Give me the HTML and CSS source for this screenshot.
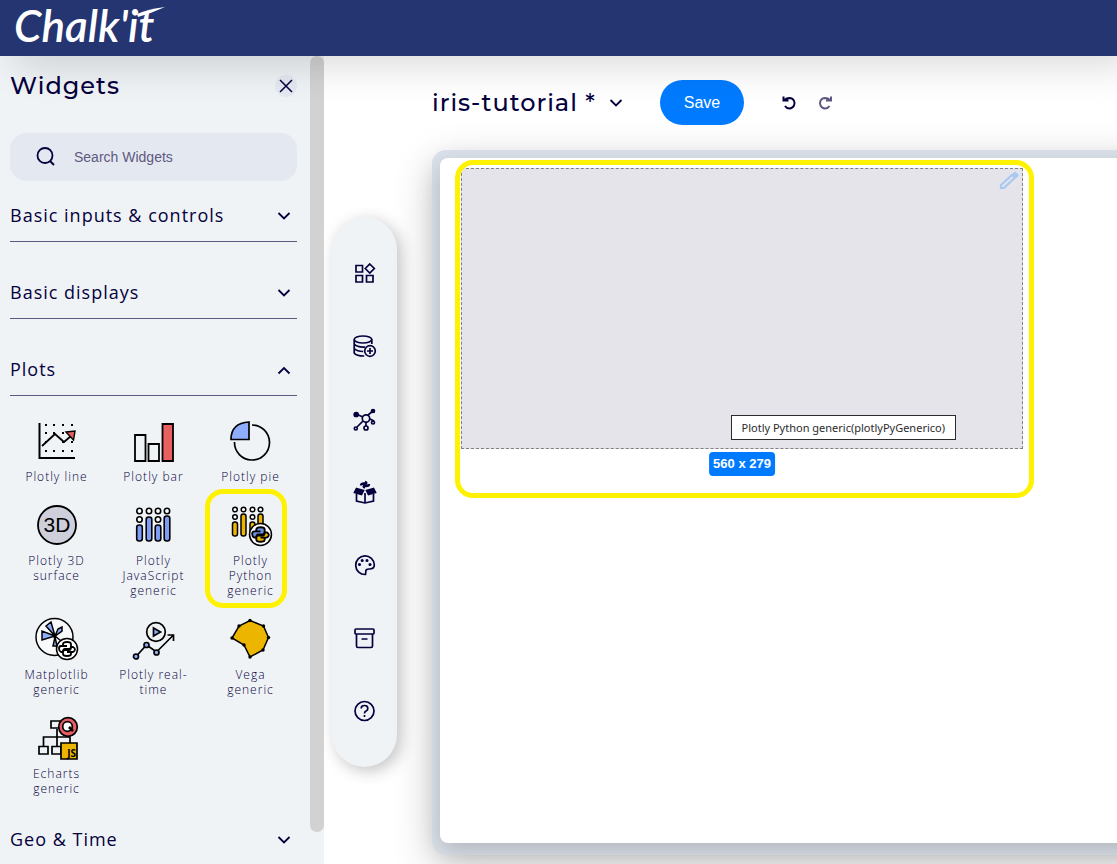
FILE: index.html
```html
<!DOCTYPE html>
<html lang="en">
<head>
<meta charset="utf-8">
<title>Chalk'it</title>
<link rel="stylesheet" href="styles.css">
</head>
<body>
<svg class="defs" aria-hidden="true">
  <symbol id="chevron" viewBox="0 0 16 16"><path d="M2.500 6L8 11.500 13.500 6" fill="none" stroke="currentColor" stroke-width="1.800"/></symbol>
  <symbol id="python" viewBox="0 0 24 24">
    <circle cx="12" cy="12" r="10.500" fill="#fff" stroke="#000" stroke-width="1.500"/>
    <path class="snake-top" d="M8 9V7q0-2 4-2t4 2v3q0 2-2 2h-4q-2 0-2 3H6q-2-1-2-3.500t2-2.500h6" stroke="#000" stroke-width="1.800"/>
    <path class="snake-bottom" d="M16 15v2q0 2-4 2t-4-2v-2q0-2 2-2h4q2 0 2-3h2q2 1 2 2.500t-2 2.500h-6" stroke="#000" stroke-width="1.800"/>
  </symbol>
</svg>

<header class="topbar">
  <a class="logo" href="#">Chalk'it<svg class="swash" width="30" height="14" viewBox="0 0 30 14" aria-hidden="true"><path d="M1 10Q12 5 29 3 16 9 2 13z" fill="#fff"/></svg></a>
</header>

<div class="layout">
  <aside class="sidebar">
    <div class="sidebar-head">
      <h2 class="heading">Widgets</h2>
      <button class="close" type="button" aria-label="Close">
        <svg width="16" height="16" viewBox="0 0 16 16"><path d="M2 2l12 12M14 2L2 14" stroke="#05003d" stroke-width="1.500"/></svg>
      </button>
    </div>
    <label class="search">
      <svg width="20" height="20" viewBox="0 0 20 20"><circle cx="9" cy="8.500" r="7.500" fill="none" stroke="#05003d" stroke-width="1.800"/><path d="M14 14l4 4" stroke="#05003d" stroke-width="2"/></svg>
      <input type="text" placeholder="Search Widgets" aria-label="Search Widgets">
    </label>

    <button class="section" type="button">Basic inputs &amp; controls<svg class="chev"><use href="#chevron"/></svg></button>
    <button class="section" type="button">Basic displays<svg class="chev"><use href="#chevron"/></svg></button>
    <button class="section" type="button" aria-expanded="true">Plots<svg class="chev"><path d="M2.500 12.500L8 7l5.500 5.500" fill="none" stroke="currentColor" stroke-width="1.800"/></svg></button>

    <div class="widgets">
      <button class="widget" type="button">
        <svg viewBox="0 0 44 44"><g fill="#000"><path d="M10 5h2v2h-2zM18 5h2v2h-2zM27 5h2v2h-2zM36 5h2v2h-2zM10 13h2v2h-2zM18 13h2v2h-2zM27 13h2v2h-2zM10 22h2v2h-2zM27 22h2v2h-2zM36 22h2v2h-2zM10 31h2v2h-2zM18 31h2v2h-2zM27 31h2v2h-2zM36 31h2v2h-2z"/></g><path d="M4.500 4v35H40" fill="none" stroke="#000" stroke-width="2"/><path d="M7 27l13-12 9 8 7-6" fill="none" stroke="#000" stroke-width="1.800"/><path d="M31 13l9-1-1.500 9z" fill="#e96060" stroke="#000" stroke-width="1.400"/></svg>
        <span>Plotly line</span>
      </button>
      <button class="widget" type="button">
        <svg viewBox="0 0 44 44" fill="none" stroke="#000" stroke-width="1.800"><path d="M3 16h10.500v26H3zM16.500 25H27v17H16.500z"/><path d="M30.500 5H41v37H30.500z" fill="#e96060"/></svg>
        <span>Plotly bar</span>
      </button>
      <button class="widget" type="button">
        <svg viewBox="0 0 44 44" fill="none" stroke="#000" stroke-width="1.700"><path d="M23 6a17.500 17.500 0 1 1-17.500 17"/><path d="M20 3v17.500H2Q2 4 20 3z" fill="#8eaefb"/></svg>
        <span>Plotly pie</span>
      </button>

      <button class="widget" type="button">
        <svg viewBox="0 0 44 44"><circle cx="22" cy="22" r="19" fill="#cfcfdb" stroke="#000" stroke-width="1.800"/><text class="icon-3d" x="22" y="29" text-anchor="middle">3D</text></svg>
        <span>Plotly 3D surface</span>
      </button>
      <button class="widget" type="button">
        <svg viewBox="0 0 44 44" fill="#fff" stroke="#000" stroke-width="1.600"><circle cx="7.500" cy="8" r="2.700"/><circle cx="17" cy="8" r="2.700"/><circle cx="26" cy="8" r="2.700"/><circle cx="35" cy="8" r="2.700"/><circle cx="7.500" cy="16.500" r="2.700"/><circle cx="26" cy="16.500" r="2.700"/><g fill="#7c9ff5"><rect x="4.700" y="22" width="5.600" height="16" rx="2.500"/><rect x="14.200" y="14" width="5.600" height="24" rx="2.500"/><rect x="23.200" y="22" width="5.600" height="16" rx="2.500"/><rect x="32.200" y="13" width="5.600" height="25" rx="2.500"/></g></svg>
        <span>Plotly JavaScript generic</span>
      </button>
      <button class="widget chosen" type="button">
        <svg viewBox="0 0 44 44"><g fill="#fff" stroke="#000" stroke-width="1.500"><circle cx="6" cy="6.500" r="2.300"/><circle cx="14.500" cy="6.500" r="2.300"/><circle cx="23.500" cy="6.500" r="2.300"/><circle cx="31.500" cy="6.500" r="2.300"/><circle cx="6" cy="14" r="2.300"/><circle cx="23.500" cy="14" r="2.300"/><g fill="#ecb500"><rect x="3.500" y="19" width="5" height="14" rx="2.300"/><rect x="12" y="11" width="5" height="22" rx="2.300"/><rect x="21" y="19" width="5" height="14" rx="2.300"/><rect x="29" y="11" width="5" height="18" rx="2.300"/></g></g><use href="#python" class="color-snakes" x="19" y="19" width="25" height="25"/></svg>
        <span>Plotly Python generic</span>
      </button>

      <button class="widget" type="button">
        <svg viewBox="0 0 44 44"><circle cx="19.500" cy="20" r="18.500" fill="#f8fafc" stroke="#000" stroke-width="1.500"/><path d="M20 19L11 9l5-4zM20 19l3-7 4-2 0 4zM20 19L7 14v9zM20 20l-2 9h4zM20 19l11 9" fill="#8eaefb" stroke="#000" stroke-width="1.500"/><use href="#python" class="plain-snakes" x="20" y="20" width="24" height="24"/></svg>
        <span>Matplotlib generic</span>
      </button>
      <button class="widget" type="button">
        <svg viewBox="0 0 44 44" fill="none" stroke="#000" stroke-width="1.700"><circle cx="24" cy="15" r="9.300"/><path d="M21.500 11v8l7-4z" fill="#8eaefb"/><path d="M4.500 39l10-11 10 7 17-17M35.500 18h6v6"/><g fill="#8eaefb"><circle cx="4" cy="39.500" r="2.500"/><circle cx="14.500" cy="28" r="2.500"/><circle cx="24.500" cy="35.500" r="2.500"/></g></svg>
        <span>Plotly real-time</span>
      </button>
      <button class="widget" type="button">
        <svg viewBox="0 0 44 44"><path d="M21 3.500l13.500 5.500L39.500 20.500 34 33l-13 7-6-12L3 21l7-12z" fill="#ecb500" stroke="#000" stroke-width="1.500"/><g><circle cx="21" cy="3.500" r="1.700"/><circle cx="34.500" cy="9" r="1.700"/><circle cx="39.500" cy="20.500" r="1.700"/><circle cx="34" cy="33" r="1.700"/><circle cx="21" cy="40" r="1.700"/><circle cx="15" cy="28" r="1.700"/><circle cx="3" cy="21" r="1.700"/><circle cx="10" cy="9" r="1.700"/></g></svg>
        <span>Vega generic</span>
      </button>

      <button class="widget" type="button">
        <svg viewBox="0 0 44 44" fill="none" stroke="#000" stroke-width="1.700"><path d="M16 5h9v7h-9zM22 13v17M8.500 30v-9H35v6M4 30.500h9V38H4zM17 30.500h9V38h-9z"/><circle cx="33" cy="11" r="9.300" fill="#e85c66"/><circle cx="32.500" cy="10.500" r="4.800" fill="#fff"/><path d="M34 11l4 4" stroke-width="2.500"/><path d="M26 27h16v16H26z" fill="#ecb500"/><text class="icon-js" x="41" y="41" text-anchor="end">JS</text></svg>
        <span>Echarts generic</span>
      </button>
    </div>

    <button class="section" type="button">Geo &amp; Time<svg class="chev"><use href="#chevron"/></svg></button>
    <div class="scroll-thumb"></div>
  </aside>

  <main class="workspace">
    <nav class="rail" aria-label="Tools">
      <button type="button" aria-label="Widgets"><svg viewBox="0 0 24 24"><path d="M3 4.500h6.500V11H3zM3 14.500h6.500V21H3zM13.500 14.500H20V21h-6.500zM16.800 3l4.500 4.500-4.500 4.500-4.500-4.500z"/></svg></button>
      <button type="button" aria-label="Data"><svg viewBox="0 0 24 24"><ellipse cx="10" cy="5.500" rx="8.800" ry="3.500"/><path d="M1.200 5.500V19q2 3 10 3M18.800 5.500V10M1.200 10q3 3.500 11 3M1.200 14.500q3 3 9 3"/><circle cx="17" cy="17" r="5.300"/><path d="M17 14v6M14 17h6"/></svg></button>
      <button type="button" aria-label="Dependencies"><svg viewBox="0 0 24 24"><path d="M3 7l7 3M20 4l-5 4M10 14l-6 6M13 15v4M17 12l4 2"/><circle cx="13" cy="11.500" r="3.700"/><circle cx="13" cy="21" r="2"/><circle cx="2.800" cy="21.500" r="1.500"/><circle cx="20" cy="15.500" r="1.500"/><g class="solid"><circle cx="3.200" cy="7.500" r="2"/><circle cx="20" cy="4" r="1.500"/></g></svg></button>
      <button type="button" aria-label="Libraries"><svg viewBox="0 0 24 24"><path d="M3.500 14v7l8.500 2 8.500-2v-7M12 13v10"/><g class="solid"><path d="M3.500 8.500l7 2-2 4-7-2zM20.500 8.500l-7 2 2 4 7-2z"/></g><path d="M8 5.500q0-2 3-2h2q1-1-1-1.500M16 4q0 2-3 2h-2q-1 1 1 1.500" stroke-width="2.400"/></svg></button>
      <button type="button" aria-label="Theme"><svg viewBox="0 0 24 24"><path d="M12.500 21.500a9.300 9.300 0 1 1 8.800-9.500q0 4-5 4-4 0-3.500 3z"/><g class="solid"><circle cx="6.500" cy="11.500" r=".7"/><circle cx="9.200" cy="7.500" r=".7"/><circle cx="14" cy="7.500" r=".7"/><circle cx="17" cy="11.500" r=".7"/></g></svg></button>
      <button type="button" aria-label="Archive"><svg viewBox="0 0 24 24"><rect x="2" y="3" width="19" height="5" rx="1"/><path d="M3.500 8v12q0 1.500 1.500 1.500h13q1.500 0 1.500-1.500V8M8.500 13h6"/></svg></button>
      <button type="button" aria-label="Help"><svg viewBox="0 0 24 24"><circle cx="11.500" cy="12" r="9.500"/><path d="M8.200 9.500q0-3 3.300-3t3.300 3q0 1.700-1.700 2.500t-1.600 2.500M11.500 16v2"/></svg></button>
    </nav>

    <div class="editor">
      <div class="project-bar">
        <h1 class="heading">iris-tutorial *</h1>
        <button class="icon-button" type="button" aria-label="Project menu"><svg class="chev" viewBox="0 1 16 16"><use href="#chevron" width="16" height="16"/></svg></button>
        <button class="save" type="button">Save</button>
        <button class="icon-button" type="button" aria-label="Undo"><svg width="16" height="16" viewBox="0 0 16 16" fill="none" stroke="#05003d" stroke-width="2"><path d="M3.500 5Q5.500 3 8.500 3a5.200 5.200 0 1 1-4.500 8M2.500 1.500v4h5"/></svg></button>
        <button class="icon-button redo" type="button" aria-label="Redo"><svg width="16" height="16" viewBox="0 0 16 16" fill="none" stroke="#5e5980" stroke-width="2"><path d="M13 5Q11 3 8 3a5.200 5.200 0 1 0 4.500 8M14 1.500v4h-5"/></svg></button>
      </div>

      <div class="frame">
        <div class="canvas">
          <div class="placed">
            <svg class="pencil" width="20" height="20" viewBox="0 0 20 20" fill="none" stroke="#a9c9f2" stroke-width="2.200"><path d="M2 17v-3L13 4l3 2.500L5 17zM15 3l1-1 2.500 2-1 1.500z"/></svg>
            <div class="tooltip">Plotly Python generic(plotlyPyGenerico)</div>
            <div class="size">560 x 279</div>
          </div>
        </div>
      </div>
    </div>
  </main>
</div>
</body>
</html>
```

FILE: styles.css
```css
* { box-sizing: border-box; }

body {
  margin: 0;
  height: 100vh;
  display: flex;
  flex-direction: column;
  overflow: hidden;
  color: #05003d;
  background: #fff;
  font-family: "Open Sans", sans-serif;
}

button {
  margin: 0;
  padding: 0;
  border: 0;
  background: none;
  color: inherit;
  font: inherit;
  cursor: pointer;
}

.defs { position: absolute; width: 0; height: 0; }

.topbar {
  position: relative;
  z-index: 2;
  flex: none;
  height: 56px;
  padding: 0 12px;
  background: #243572;
  box-shadow: 16px 8px 40px rgba(0, 0, 0, 0.16);
}

.logo {
  position: relative;
  display: inline-block;
  padding: 0 8px 0 2px;
  color: #fff;
  font: italic 600 44px/50px Lato, sans-serif;
  text-decoration: none;
}

.swash { position: absolute; top: 4px; right: -4px; }

.layout { flex: 1; min-height: 0; display: flex; }

.sidebar {
  position: relative;
  flex: none;
  width: 324px;
  padding: 0 27px 0 10px;
  overflow: hidden;
  background: #eff3f6;
}

.sidebar-head {
  display: flex;
  align-items: center;
  justify-content: space-between;
  height: 60px;
}

.heading {
  margin: 0;
  font: 500 24px/32px Montserrat, Inter, sans-serif;
  letter-spacing: 1px;
}

.close {
  display: grid;
  place-items: center;
  width: 22px;
  height: 22px;
  border-radius: 50%;
  background: #e4e8f0;
}

.search {
  display: flex;
  align-items: center;
  gap: 18px;
  height: 48px;
  margin: 17px 0 7px;
  padding: 0 26px;
  border-radius: 16px;
  background: #e4e8f0;
}

.search input {
  flex: 1;
  min-width: 0;
  padding: 0;
  border: 0;
  outline: 0;
  background: none;
  font: 14px "Liberation Sans", sans-serif;
}

.search input::placeholder { color: #5e5980; }

.section {
  display: flex;
  align-items: center;
  justify-content: space-between;
  width: 100%;
  height: 54px;
  margin-bottom: 23px;
  padding-right: 5px;
  border-bottom: 1px solid #5e5980;
  font-size: 18px;
  font-weight: 400;
  letter-spacing: 1px;
}

.chev { width: 16px; height: 16px; }

.widgets {
  display: grid;
  grid-template-columns: repeat(3, 1fr);
  row-gap: 19px;
  margin: 0 -2px 16px;
}

.widget {
  display: flex;
  flex-direction: column;
  align-items: center;
  gap: 6px;
  padding: 0 12px;
  font-size: 12px;
  font-weight: 300;
  line-height: 15px;
  letter-spacing: 1px;
}

.widget svg { width: 44px; height: 44px; }

.icon-3d { font: 21px "Liberation Sans", sans-serif; letter-spacing: 0; }
.icon-js { font: bold 10px "Open Sans", sans-serif; letter-spacing: 0; fill: #000; stroke: none; }
.snake-top { fill: var(--top); }
.snake-bottom { fill: var(--bottom); }
.color-snakes { --top: #6d8fe0; --bottom: #ecb500; }
.plain-snakes { --top: #fff; --bottom: #fff; }

.chosen { position: relative; }

.chosen::after {
  content: "";
  position: absolute;
  inset: -14px 12px -10px 3px;
  border: 5px solid #fff200;
  border-radius: 18px;
}

.scroll-thumb {
  position: absolute;
  top: 0;
  right: 0;
  width: 14px;
  height: 96%;
  border-radius: 7px;
  background: #d2d2d2;
}

.workspace {
  flex: 1;
  min-width: 0;
  display: flex;
  align-items: flex-start;
  gap: 35px;
  padding-left: 8px;
}

.rail {
  flex: none;
  display: flex;
  flex-direction: column;
  align-items: center;
  gap: 49px;
  width: 65px;
  margin-top: 161px;
  padding: 44px 0;
  border-radius: 33px;
  background: #eff3f6;
  box-shadow: 4px 4px 16px rgba(0, 0, 0, 0.24);
}

.rail button { width: 24px; height: 24px; }
.rail svg { display: block; fill: none; stroke: #05003d; stroke-width: 1.7; }
.rail .solid { fill: #05003d; }

.editor {
  flex: 1;
  min-width: 0;
  align-self: stretch;
  display: flex;
  flex-direction: column;
  padding-bottom: 9px;
}

.project-bar {
  display: flex;
  align-items: center;
  height: 45px;
  margin: 24px 0 25px;
}

.project-bar .heading { white-space: nowrap; }

.icon-button { display: grid; margin-left: 12px; }

.save {
  width: 84px;
  height: 45px;
  margin: 0 25px 0 36px;
  border-radius: 23px;
  background: #007bff;
  color: #fff;
  font: 16px "Liberation Sans", sans-serif;
}

.redo { margin-left: 20px; }

.frame {
  flex: 1;
  display: flex;
  margin-right: -40px;
  padding: 8px 8px 12px;
  border-radius: 14px;
  background: #dce2eb;
  box-shadow: 0 12px 40px rgba(0, 0, 0, 0.2);
}

.canvas {
  position: relative;
  flex: 1;
  border-radius: 8px;
  background: #fff;
  box-shadow: 0 8px 24px rgba(0, 0, 0, 0.2);
}

.placed {
  position: absolute;
  top: 10px;
  left: 21px;
  width: 562px;
  height: 281px;
  border: 1px dashed #808080;
  background: #e5e4ea;
}

.placed::after {
  content: "";
  position: absolute;
  inset: -9px -12px -50px -7px;
  border: 5px solid #fff200;
  border-radius: 18px;
}

.pencil { position: absolute; top: 2px; right: 3px; }

.tooltip {
  position: absolute;
  right: 66px;
  bottom: 8px;
  padding: 0 10px;
  border: 1px solid #2b2b2b;
  background: #fff;
  color: #2b2b2b;
  font: 11px/23px "Noto Sans", sans-serif;
  white-space: nowrap;
}

.size {
  position: absolute;
  top: 100%;
  left: 50%;
  margin-top: 4px;
  padding: 0 4px;
  border-radius: 4px;
  background: #007bff;
  color: #fff;
  font: bold 13px/24px "Liberation Sans", sans-serif;
  white-space: nowrap;
  transform: translateX(-50%);
}
```
